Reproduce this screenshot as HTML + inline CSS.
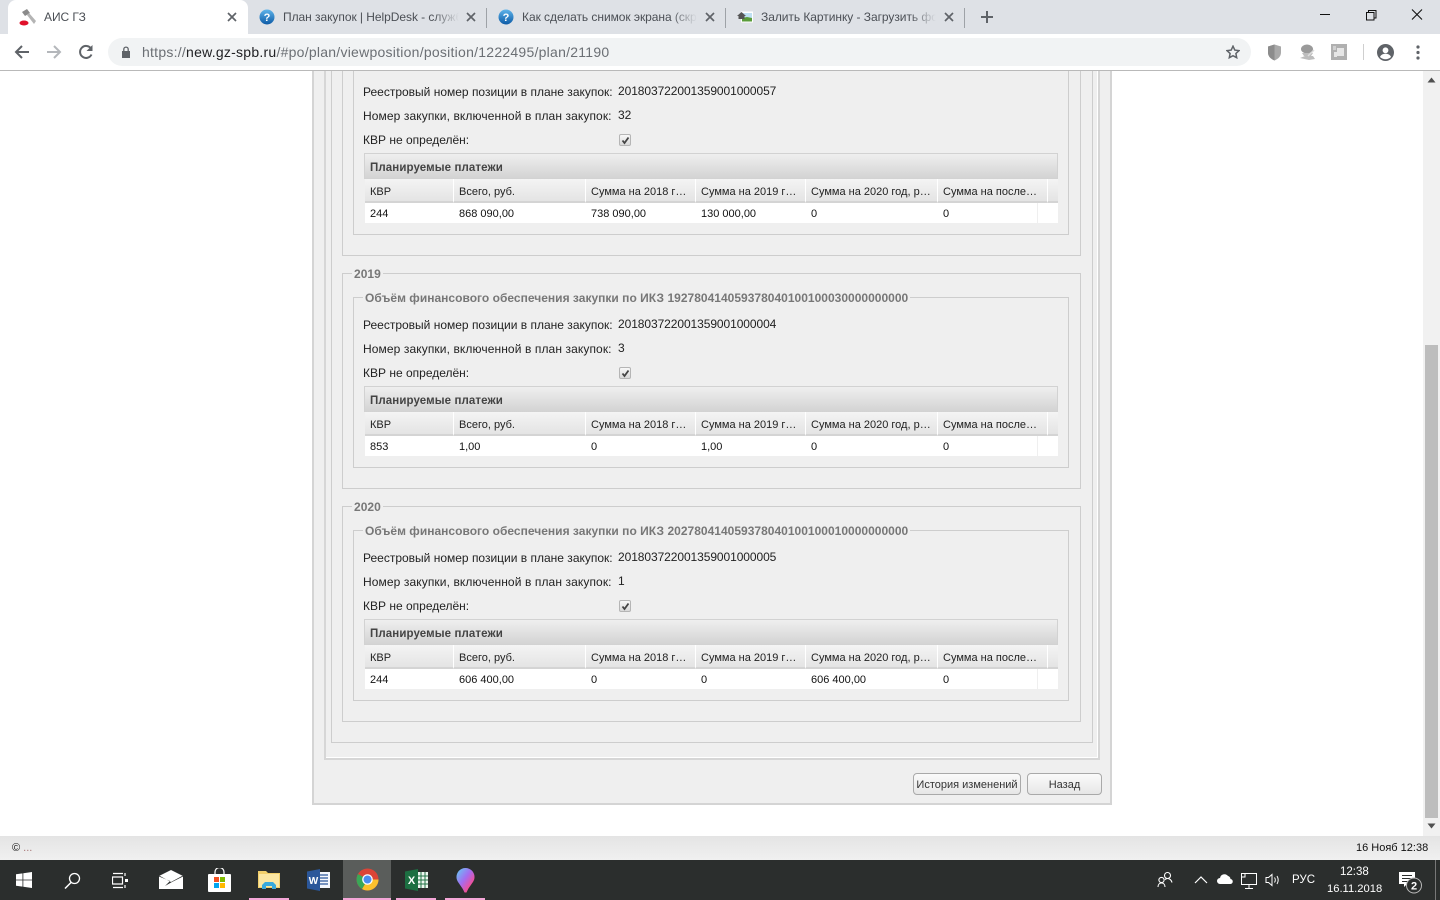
<!DOCTYPE html>
<html><head><meta charset="utf-8"><style>
html,body{margin:0;padding:0;width:1440px;height:900px;overflow:hidden;background:#fff;font-family:"Liberation Sans","Noto Sans CJK JP",sans-serif}
div,span,svg{position:absolute;box-sizing:border-box}
.t{white-space:nowrap;line-height:14px;height:14px;font-size:12px;color:#111}
.tab{font-size:12px;letter-spacing:-.05px;color:#4b4f55;white-space:nowrap;overflow:hidden;line-height:16px;height:16px;top:9px}
.fs{border:1px solid #cdcdcd}
.leg{background:#efefef;font-weight:bold;font-size:12px;letter-spacing:.015px;color:#777;white-space:nowrap;line-height:14px;height:14px;padding:0 2px}
.lb{font-size:12px;color:#222;white-space:nowrap;line-height:14px;height:14px;left:363px}
.lb2{letter-spacing:.1px}
.val{font-size:12px;letter-spacing:-.08px;color:#222;white-space:nowrap;line-height:14px;height:14px;left:618px}
.title{left:364px;width:694px;height:26px;border:1px solid #d2d2d2;border-bottom:0;background:linear-gradient(#efefef,#d2d2d2)}
.hd{height:24px;top:179px;background:linear-gradient(#f4f4f4,#e4e4e4);border-right:1px solid #fff;border-bottom:2px solid #d4d4d4;font-size:11px;line-height:26px;color:#222;padding-left:5px;white-space:nowrap;overflow:hidden}
.c{top:203px;height:20px;background:#fff;font-size:11px;line-height:22px;color:#111;padding-left:5px;white-space:nowrap}
.pt{font-size:11.5px;letter-spacing:.1px;font-weight:bold;color:#444}
.chk{left:619px;width:12px;height:12px;border:1px solid #b5b5b5;border-radius:2px;background:linear-gradient(#f8f8f8,#d8d8d8)}
.bar{top:898px;height:2px;background:#f4a6d7}
</style></head><body>

<!-- chrome -->
<div style="left:0;top:0;width:1440px;height:34px;background:#dee1e6"></div>
<div style="left:8px;top:0;width:240px;height:34px;background:#fff;border-radius:8px 8px 0 0"></div>
<div style="left:0;top:34px;width:1440px;height:36px;background:#fff"></div>
<div style="left:0;top:70px;width:1440px;height:1px;background:#b9b9b9"></div>

<svg style="left:19px;top:8px" width="18" height="18" viewBox="0 0 18 18"><path d="M3 4l5-3 3 4-5 3z" fill="#8a8a8a"/><path d="M8 7l2-2 7 8-2 3z" fill="#b4b4b4"/><ellipse cx="5" cy="15" rx="4.500" ry="2.500" fill="#e0102a"/></svg>
<div class="tab" style="left:44px;width:180px">АИС ГЗ</div>
<svg style="left:227px;top:12px" width="10" height="10" viewBox="0 0 10 10"><path d="M1 1l8 8M9 1l-8 8" stroke="#5f6368" stroke-width="1.700"/></svg>

<svg style="left:259px;top:9px" width="16" height="16" viewBox="0 0 16 16"><defs><linearGradient id="g" x1="0" y1="0" x2="0" y2="1"><stop offset="0" stop-color="#5fb4ea"/><stop offset="1" stop-color="#0c5aa6"/></linearGradient></defs><circle cx="8" cy="8" r="7.500" fill="url(#g)"/><text x="8" y="12" font-size="11" font-weight="bold" fill="#fff" text-anchor="middle" font-family="Liberation Sans">?</text></svg>
<div class="tab" style="left:283px;width:176px;-webkit-mask-image:linear-gradient(90deg,#000 85%,transparent)">План закупок | HelpDesk - служба</div>
<svg style="left:466px;top:12px" width="10" height="10" viewBox="0 0 10 10"><path d="M1 1l8 8M9 1l-8 8" stroke="#5f6368" stroke-width="1.700"/></svg>
<div style="left:486px;top:8px;width:1px;height:20px;background:#9ea2a7"></div>

<svg style="left:498px;top:9px" width="16" height="16" viewBox="0 0 16 16"><circle cx="8" cy="8" r="7.500" fill="url(#g)"/><text x="8" y="12" font-size="11" font-weight="bold" fill="#fff" text-anchor="middle" font-family="Liberation Sans">?</text></svg>
<div class="tab" style="left:522px;width:175px;-webkit-mask-image:linear-gradient(90deg,#000 85%,transparent)">Как сделать снимок экрана (скрин</div>
<svg style="left:705px;top:12px" width="10" height="10" viewBox="0 0 10 10"><path d="M1 1l8 8M9 1l-8 8" stroke="#5f6368" stroke-width="1.700"/></svg>
<div style="left:725px;top:8px;width:1px;height:20px;background:#9ea2a7"></div>

<svg style="left:737px;top:10px" width="16" height="14" viewBox="0 0 16 14"><rect x="4" y="1.500" width="12" height="11" fill="#fff"/><rect x="5" y="3" width="10" height="6" fill="#bfe0f2"/><path d="M5 8l5-1 5 1v3.500H5z" fill="#5a9c3a"/><path d="M0 6l4.500-4L9 6H7.500v3h-6V6z" fill="#555"/></svg>
<div class="tab" style="left:761px;width:175px;-webkit-mask-image:linear-gradient(90deg,#000 85%,transparent)">Залить Картинку - Загрузить фото</div>
<svg style="left:944px;top:12px" width="10" height="10" viewBox="0 0 10 10"><path d="M1 1l8 8M9 1l-8 8" stroke="#5f6368" stroke-width="1.700"/></svg>
<div style="left:964px;top:8px;width:1px;height:20px;background:#9ea2a7"></div>
<svg style="left:981px;top:11px" width="12" height="12" viewBox="0 0 12 12"><path d="M6 0v12M0 6h12" stroke="#5f6368" stroke-width="2"/></svg>

<svg style="left:1320px;top:9px" width="110" height="16" viewBox="0 0 110 16"><path d="M0 5.500h10" stroke="#111" stroke-width="1"/><path d="M46.500 3.500h7.500v7.500h-7.500zM48.500 3.500V1.500h7.500v7.500h-2" fill="none" stroke="#111" stroke-width="1"/><path d="M92 0.500l10 10M102 0.500l-10 10" stroke="#111" stroke-width="1.100"/></svg>

<svg style="left:14px;top:44px" width="16" height="16" viewBox="0 0 16 16"><path d="M15 8H2M8 2L2 8l6 6" fill="none" stroke="#5f6368" stroke-width="2"/></svg>
<svg style="left:46px;top:44px" width="16" height="16" viewBox="0 0 16 16"><path d="M1 8h13M8 2l6 6-6 6" fill="none" stroke="#b4b7bb" stroke-width="2"/></svg>
<svg style="left:78px;top:44px" width="16" height="16" viewBox="0 0 16 16"><path d="M13.500 10.500A6 6 0 1 1 13 4.500" fill="none" stroke="#5f6368" stroke-width="2"/><path d="M14.500 1v6h-6z" fill="#5f6368"/></svg>

<div style="left:108px;top:38px;width:1143px;height:28px;background:#f1f3f4;border-radius:14px"></div>
<svg style="left:121px;top:46px" width="10" height="12" viewBox="0 0 10 12"><rect x="1" y="5" width="8" height="7" fill="#5f6368"/><path d="M2.800 5V3.300a2.200 2.200 0 0 1 4.400 0V5" fill="none" stroke="#5f6368" stroke-width="1.300"/></svg>
<div style="left:142px;top:44px;font-size:14px;letter-spacing:.25px;line-height:16px;height:16px;color:#6b6f74;white-space:nowrap">https://<span style="position:static;color:#202124">new.gz-spb.ru</span>/#po/plan/viewposition/position/1222495/plan/21190</div>
<svg style="left:1226px;top:45px" width="14" height="14" viewBox="0 0 14 14"><path d="M7 1.200l1.800 3.900 4.200.5-3.100 2.900.8 4.200L7 10.700l-3.700 2 .8-4.200L1 5.600l4.200-.5z" fill="none" stroke="#5f6368" stroke-width="1.500"/></svg>

<svg style="left:1267px;top:44px" width="15" height="17" viewBox="0 0 15 17"><path d="M7.500 0.500L14 2.500v6c0 4-3 6.500-6.500 8C4 15 1 12.500 1 8.500v-6z" fill="#a9a9a9"/><path d="M7.500 0.500L1 2.500v6c0 4 3 6.500 6.500 8z" fill="#8c8c8c"/></svg>
<svg style="left:1299px;top:44px" width="17" height="17" viewBox="0 0 17 17"><ellipse cx="8" cy="5" rx="6" ry="4.500" fill="#9a9a9a"/><path d="M3 9h11l-2 3H5zM1 14l5-2h8l2 3-6 1z" fill="#bdbdbd"/><path d="M9 12l6-6" stroke="#ddd" stroke-width="1.500"/></svg>
<svg style="left:1331px;top:44px" width="16" height="16" viewBox="0 0 16 16"><rect width="16" height="16" fill="#b0b0b0"/><path d="M6 4h7v8H6zM3 8h3v5H3z" fill="#e6e6e6"/><rect x="2" y="2" width="3" height="4" fill="#d0d0d0"/></svg>
<div style="left:1363px;top:44px;width:1px;height:16px;background:#cfcfcf"></div>
<svg style="left:1377px;top:44px" width="17" height="17" viewBox="0 0 17 17"><circle cx="8.500" cy="8.500" r="8.500" fill="#5f6368"/><circle cx="8.500" cy="6.300" r="2.900" fill="#fff"/><path d="M3 13c1-2.500 3.500-3.200 5.500-3.200S13 10.500 14 13c-1.500 1.500-3.500 2.200-5.500 2.200S4.500 14.500 3 13z" fill="#fff"/></svg>
<svg style="left:1416px;top:45px" width="4" height="15" viewBox="0 0 4 15"><circle cx="2" cy="2" r="1.600" fill="#5f6368"/><circle cx="2" cy="7.500" r="1.600" fill="#5f6368"/><circle cx="2" cy="13" r="1.600" fill="#5f6368"/></svg>

<!-- page -->
<div style="left:312px;top:71px;width:800px;height:734px;background:#efefef;border:2px solid #d4d4d4;border-top:0"></div>
<div style="left:324px;top:71px;width:776px;height:689px;border:2px solid #d6d6d6;border-top:0;box-shadow:inset -1px -1px 0 #fff"></div>
<div class="fs" style="left:331px;top:71px;width:762px;height:672px;border-top:0"></div>

<!-- scrollbar -->
<div style="left:1423px;top:71px;width:17px;height:765px;background:#f1f1f1"></div>
<div style="left:1425px;top:345px;width:13px;height:473px;background:#bdbdbd"></div>
<svg style="left:1427px;top:77px" width="9" height="6" viewBox="0 0 9 6"><path d="M4.500 0.500L8.500 5.500H0.500z" fill="#505050"/></svg>
<svg style="left:1427px;top:823px" width="9" height="6" viewBox="0 0 9 6"><path d="M4.500 5.500L8.500 0.500H0.500z" fill="#505050"/></svg>

<!-- section 1 -->
<div class="fs" style="left:342px;top:71px;width:739px;height:185px;border-top:0"></div>
<div class="fs" style="left:353px;top:71px;width:716px;height:164px;border-top:0"></div>
<div class="lb" style="top:85px">Реестровый номер позиции в плане закупок:</div><div class="val" style="top:84px">201803722001359001000057</div>
<div class="lb lb2" style="top:109px">Номер закупки, включенной в план закупок:</div><div class="val" style="top:108px">32</div>
<div class="lb" style="top:133px">КВР не определён:</div>
<div class="chk" style="top:134px"><svg style="left:1px;top:1px" width="9" height="9" viewBox="0 0 9 9"><path d="M1.500 4.500l2 2.500 4-5.500" fill="none" stroke="#444" stroke-width="1.800"/></svg></div>
<div class="title" style="top:153px"></div><div class="t pt" style="left:370px;top:161px">Планируемые платежи</div>
<div class="hd" style="left:365px;width:89px">КВР</div><div class="hd" style="left:454px;width:132px">Всего, руб.</div><div class="hd" style="left:586px;width:110px">Сумма на 2018 г…</div><div class="hd" style="left:696px;width:110px">Сумма на 2019 г…</div><div class="hd" style="left:806px;width:132px">Сумма на 2020 год, р…</div><div class="hd" style="left:938px;width:110px">Сумма на после…</div><div class="hd" style="left:1048px;width:10px;border-right:0"></div>
<div class="c" style="left:365px;width:89px">244</div><div class="c" style="left:454px;width:132px">868 090,00</div><div class="c" style="left:586px;width:110px">738 090,00</div><div class="c" style="left:696px;width:110px">130 000,00</div><div class="c" style="left:806px;width:132px">0</div><div class="c" style="left:938px;width:99px">0</div><div class="c" style="left:1038px;width:20px;padding:0"></div>

<!-- section 2 -->
<div class="fs" style="left:342px;top:273px;width:739px;height:216px"></div>
<div class="leg" style="left:352px;top:267px">2019</div>
<div class="fs" style="left:353px;top:297px;width:716px;height:171px"></div>
<div class="leg" style="left:363px;top:291px">Объём финансового обеспечения закупки по ИКЗ 192780414059378040100100030000000000</div>
<div class="lb" style="top:318px">Реестровый номер позиции в плане закупок:</div><div class="val" style="top:317px">201803722001359001000004</div>
<div class="lb lb2" style="top:342px">Номер закупки, включенной в план закупок:</div><div class="val" style="top:341px">3</div>
<div class="lb" style="top:366px">КВР не определён:</div>
<div class="chk" style="top:367px"><svg style="left:1px;top:1px" width="9" height="9" viewBox="0 0 9 9"><path d="M1.500 4.500l2 2.500 4-5.500" fill="none" stroke="#444" stroke-width="1.800"/></svg></div>
<div class="title" style="top:386px"></div><div class="t pt" style="left:370px;top:394px">Планируемые платежи</div>
<div class="hd" style="top:412px;left:365px;width:89px">КВР</div><div class="hd" style="top:412px;left:454px;width:132px">Всего, руб.</div><div class="hd" style="top:412px;left:586px;width:110px">Сумма на 2018 г…</div><div class="hd" style="top:412px;left:696px;width:110px">Сумма на 2019 г…</div><div class="hd" style="top:412px;left:806px;width:132px">Сумма на 2020 год, р…</div><div class="hd" style="top:412px;left:938px;width:110px">Сумма на после…</div><div class="hd" style="top:412px;left:1048px;width:10px;border-right:0"></div>
<div class="c" style="top:436px;left:365px;width:89px">853</div><div class="c" style="top:436px;left:454px;width:132px">1,00</div><div class="c" style="top:436px;left:586px;width:110px">0</div><div class="c" style="top:436px;left:696px;width:110px">1,00</div><div class="c" style="top:436px;left:806px;width:132px">0</div><div class="c" style="top:436px;left:938px;width:99px">0</div><div class="c" style="top:436px;left:1038px;width:20px;padding:0"></div>

<!-- section 3 -->
<div class="fs" style="left:342px;top:506px;width:739px;height:216px"></div>
<div class="leg" style="left:352px;top:500px">2020</div>
<div class="fs" style="left:353px;top:530px;width:716px;height:171px"></div>
<div class="leg" style="left:363px;top:524px">Объём финансового обеспечения закупки по ИКЗ 202780414059378040100100010000000000</div>
<div class="lb" style="top:551px">Реестровый номер позиции в плане закупок:</div><div class="val" style="top:550px">201803722001359001000005</div>
<div class="lb lb2" style="top:575px">Номер закупки, включенной в план закупок:</div><div class="val" style="top:574px">1</div>
<div class="lb" style="top:599px">КВР не определён:</div>
<div class="chk" style="top:600px"><svg style="left:1px;top:1px" width="9" height="9" viewBox="0 0 9 9"><path d="M1.500 4.500l2 2.500 4-5.500" fill="none" stroke="#444" stroke-width="1.800"/></svg></div>
<div class="title" style="top:619px"></div><div class="t pt" style="left:370px;top:627px">Планируемые платежи</div>
<div class="hd" style="top:645px;left:365px;width:89px">КВР</div><div class="hd" style="top:645px;left:454px;width:132px">Всего, руб.</div><div class="hd" style="top:645px;left:586px;width:110px">Сумма на 2018 г…</div><div class="hd" style="top:645px;left:696px;width:110px">Сумма на 2019 г…</div><div class="hd" style="top:645px;left:806px;width:132px">Сумма на 2020 год, р…</div><div class="hd" style="top:645px;left:938px;width:110px">Сумма на после…</div><div class="hd" style="top:645px;left:1048px;width:10px;border-right:0"></div>
<div class="c" style="top:669px;left:365px;width:89px">244</div><div class="c" style="top:669px;left:454px;width:132px">606 400,00</div><div class="c" style="top:669px;left:586px;width:110px">0</div><div class="c" style="top:669px;left:696px;width:110px">0</div><div class="c" style="top:669px;left:806px;width:132px">606 400,00</div><div class="c" style="top:669px;left:938px;width:99px">0</div><div class="c" style="top:669px;left:1038px;width:20px;padding:0"></div>

<!-- buttons -->
<div style="left:913px;top:773px;width:108px;height:22px;border:1px solid #a9a9a9;border-radius:4px;background:linear-gradient(#fbfbfb,#e6e6e6);font-size:11px;line-height:22px;text-align:center;color:#333">История изменений</div>
<div style="left:1027px;top:773px;width:75px;height:22px;border:1px solid #a9a9a9;border-radius:4px;background:linear-gradient(#fbfbfb,#e6e6e6);font-size:11px;line-height:22px;text-align:center;color:#333">Назад</div>

<!-- status bar -->
<div style="left:0;top:836px;width:1440px;height:24px;background:linear-gradient(#e4e4e4,#f0f0f0)"></div>
<div class="t" style="left:12px;top:841px;font-size:11px;color:#111">©<span style="position:static;color:#a77"> ...</span></div>
<div class="t" style="left:1356px;top:841px;font-size:11px;color:#111">16 Нояб 12:38</div>

<!-- taskbar -->
<div style="left:0;top:860px;width:1440px;height:40px;background:#2b2e2d"></div>
<div style="left:343px;top:860px;width:48px;height:40px;background:#5a5d5b"></div>
<div class="bar" style="left:249px;width:40px"></div><div class="bar" style="left:343px;width:48px"></div><div class="bar" style="left:396px;width:40px"></div><div class="bar" style="left:445px;width:40px"></div>

<svg style="left:16px;top:872px" width="16" height="16" viewBox="0 0 16 16"><path d="M0 2.300l6.500-.9v6.200H0zM7.300 1.300L16 0v7.600H7.300zM0 8.400h6.500v6.200L0 13.700zM7.300 8.400H16V16l-8.700-1.300z" fill="#fff"/></svg>
<svg style="left:64px;top:872px" width="17" height="17" viewBox="0 0 17 17"><circle cx="10.500" cy="6.500" r="5" fill="none" stroke="#fff" stroke-width="1.300"/><path d="M7 10.500L1 16.500" stroke="#fff" stroke-width="1.500"/></svg>
<svg style="left:112px;top:872px" width="17" height="17" viewBox="0 0 17 17"><path d="M0.500 5h10v7h-10zM1 1.500h10M1 15.500h10M13 1v3M13 13v3" fill="none" stroke="#fff" stroke-width="1.200"/><rect x="13" y="7" width="3" height="3" fill="#fff"/></svg>
<svg style="left:159px;top:870px" width="24" height="19" viewBox="0 0 24 19"><path d="M0 6L12 0l12 6v13H0z" fill="#fff"/><path d="M0 5.500L12 12 24 5.500V6.500L13 12l-7 4 5-5L0 6.500z" fill="#2b2e2d"/></svg>
<svg style="left:208px;top:868px" width="23" height="24" viewBox="0 0 23 24"><path d="M7 7V4a4 4 0 0 1 9 0v3" fill="none" stroke="#fff" stroke-width="1.200"/><rect y="6" width="23" height="18" rx="1" fill="#fff"/><rect x="6" y="9" width="5" height="5" fill="#f25022"/><rect x="12" y="9" width="5" height="5" fill="#7fba00"/><rect x="6" y="15" width="5" height="5" fill="#00a4ef"/><rect x="12" y="15" width="5" height="5" fill="#ffb900"/></svg>
<svg style="left:258px;top:870px" width="22" height="20" viewBox="0 0 22 20"><path d="M0 1h8l2 2h12v15H0z" fill="#f2cf6b"/><rect x="1" y="4" width="20" height="13" fill="#fbe6a2"/><path d="M4 19v-4l3-3h8l3 3v4h-4v-3H8v3z" fill="#39a9dc"/></svg>
<svg style="left:307px;top:869px" width="23" height="22" viewBox="0 0 23 22"><rect x="9" y="3" width="14" height="16" fill="#f3f6fb"/><path d="M13 6h8M13 9h8M13 12h8M13 15h8" stroke="#2b579a" stroke-width="1.200"/><path d="M0 2.500L13 0v22L0 19.500z" fill="#2b579a"/><text x="6.500" y="15" font-size="10" font-weight="bold" fill="#fff" text-anchor="middle" font-family="Liberation Sans">W</text></svg>
<svg style="left:356px;top:868px" width="23" height="23" viewBox="0 0 23 23"><circle cx="11.500" cy="11.500" r="11" fill="#db4437"/><path d="M11.500 11.500L22.500 11.500A11 11 0 0 1 6 21z" fill="#fbc02d"/><path d="M11.500 11.500L6 21A11 11 0 0 1 2 6z" fill="#3aa757"/><circle cx="11.500" cy="11.500" r="5.300" fill="#fff"/><circle cx="11.500" cy="11.500" r="4" fill="#4a8cf0"/></svg>
<svg style="left:405px;top:869px" width="23" height="22" viewBox="0 0 23 22"><rect x="12" y="3" width="11" height="16" fill="#eef6f0"/><path d="M16 3v16M20 3v16M12 7h11M12 11h11M12 15h11" stroke="#217346" stroke-width="1"/><path d="M0 2.500L13 0v22L0 19.500z" fill="#1d6f42"/><text x="6.500" y="15" font-size="11" font-weight="bold" fill="#fff" text-anchor="middle" font-family="Liberation Sans">X</text></svg>
<svg style="left:456px;top:868px" width="19" height="25" viewBox="0 0 19 25"><defs><linearGradient id="p" x1="0" y1="0" x2="1" y2="1"><stop offset="0" stop-color="#5fd0f5"/><stop offset=".45" stop-color="#a56cf0"/><stop offset=".75" stop-color="#f0509a"/><stop offset="1" stop-color="#f6a33a"/></linearGradient></defs><path d="M9.500 0A9 9 0 0 1 18.500 9.500C18.500 14 13 18 10.500 24.500H8.500C6 18 .5 14 .5 9.500A9 9 0 0 1 9.500 0z" fill="url(#p)"/></svg>

<svg style="left:1157px;top:871px" width="16" height="17" viewBox="0 0 16 17"><circle cx="10.500" cy="4.500" r="3" fill="none" stroke="#fff" stroke-width="1.100"/><circle cx="4.500" cy="9" r="2.600" fill="none" stroke="#fff" stroke-width="1.100"/><path d="M1 16c0-2.500 1.500-4 3.500-4S8 13.500 8 16M8 8.500c1-.7 2-1 2.500-1 2 0 4 1.500 4.500 4" fill="none" stroke="#fff" stroke-width="1.100"/></svg>
<svg style="left:1194px;top:875px" width="14" height="9" viewBox="0 0 14 9"><path d="M1 8l6-6 6 6" fill="none" stroke="#fff" stroke-width="1.200"/></svg>
<svg style="left:1217px;top:873px" width="16" height="12" viewBox="0 0 16 12"><path d="M3 11a3 3 0 0 1 0-6 4.500 4.500 0 0 1 8-2 3.500 3.500 0 0 1 2.500 3A2.500 2.500 0 0 1 13 11z" fill="#fff"/></svg>
<svg style="left:1241px;top:873px" width="17" height="16" viewBox="0 0 17 16"><path d="M0.500 2.500v9h15v-11H4" fill="none" stroke="#fff" stroke-width="1"/><rect x="0.500" y="0.500" width="3.500" height="3.500" fill="#2b2e2d" stroke="#fff"/><path d="M8 11.500v3.500M4 15.500h8" stroke="#fff"/></svg>
<svg style="left:1265px;top:873px" width="16" height="14" viewBox="0 0 16 14"><path d="M1 4.500h2.500L7 1.500v11L3.500 9.500H1z" fill="none" stroke="#fff"/><path d="M9.500 4.500c1 1.500 1 3.500 0 5M12 3c1.500 2.500 1.500 5.500 0 8" fill="none" stroke="#fff"/></svg>
<div class="t" style="left:1292px;top:873px;color:#fff;font-size:11.500px">РУС</div>
<div class="t" style="left:1340px;top:865px;color:#fff;font-size:11.500px">12:38</div>
<div class="t" style="left:1327px;top:882px;color:#fff;font-size:11.200px">16.11.2018</div>
<svg style="left:1399px;top:872px" width="26" height="24" viewBox="0 0 26 24"><path d="M0 0h16v12H8l-3 3v-3H0z" fill="#fff"/><path d="M3 3.500h10M3 6.500h10M3 9.500h7" stroke="#2b2e2d"/><circle cx="15" cy="13.500" r="7.500" fill="#2b2e2d" stroke="#bbb"/><text x="15" y="17.500" font-size="11" font-weight="bold" fill="#fff" text-anchor="middle" font-family="Liberation Sans">2</text></svg>
<div style="left:1435px;top:860px;width:1px;height:40px;background:#777"></div>
</body></html>
